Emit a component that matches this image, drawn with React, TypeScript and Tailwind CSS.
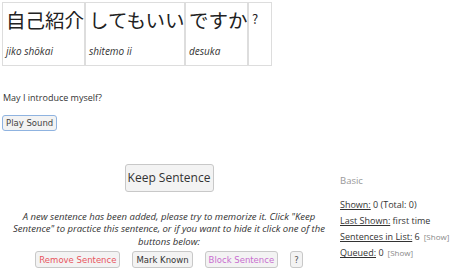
const words = [
  { jp: "自己紹介", romaji: "jiko shōkai", w: "w-[81px]" },
  { jp: "してもいい", romaji: "shitemo ii", w: "w-[100px]" },
  { jp: "ですか", romaji: "desuka", w: "w-[63px]" },
  { jp: "?", romaji: "", w: "w-[24px]" },
];

const stats = [
  { label: "Shown:", value: "0 (Total: 0)", show: false },
  { label: "Last Shown:", value: "first time", show: false },
  { label: "Sentences in List:", value: "6", show: true },
  { label: "Queued:", value: "0", show: true },
];

const smallBtn =
  "h-[17px] px-[3px] rounded-[3px] border border-[#c8c8c8] bg-[#f3f3f3] text-[8.5px] leading-none font-['DejaVu_Sans',sans-serif]";

export default function App() {
  return (
    <div className="w-[450px] h-[270px] bg-white text-[#333] font-['Open_Sans',sans-serif] overflow-hidden relative">
      {/* Sentence table */}
      <div className="flex ml-[2px] mt-[2px] border border-[#ddd] w-fit">
        {words.map((w, i) => (
          <div
            key={i}
            className={`${w.w} h-[62px] flex flex-col px-[3px] ${i > 0 ? "border-l-2 border-[#ddd]" : ""}`}
          >
            <div
              className={`${w.jp === "?" ? "text-[13px] mt-[4px]" : "text-[19.5px] mt-[5px]"} h-[24px] leading-[24px] whitespace-nowrap text-[#222] font-['Noto_Sans_CJK_JP',sans-serif]`}
            >
              {w.jp}
            </div>
            <div className="mt-[14px] text-[10px] italic leading-none text-[#333] whitespace-nowrap">
              {w.romaji}
            </div>
          </div>
        ))}
      </div>

      <div className="mt-[27px] ml-[3px] text-[9px] leading-none">
        May I introduce myself?
      </div>

      <button className="mt-[13px] ml-[2px] h-[16px] px-[3px] rounded-[3px] border border-[#8fb3e0] bg-[#f3f3f3] text-[8.5px] leading-none text-[#444] font-['DejaVu_Sans',sans-serif]">
        Play Sound
      </button>

      <div className="flex">
        {/* Main actions */}
        <div className="w-[338px] flex flex-col items-center">
          <button className="mt-[32px] w-[89px] h-[28px] rounded-[3px] border border-[#c8c8c8] bg-[#f3f3f3] text-[12px] text-[#333]">
            Keep Sentence
          </button>
          <p className="mt-[19px] w-[318px] text-center text-[9.5px] leading-[12.5px] italic text-[#333]">
            A new sentence has been added, please try to memorize it. Click "Keep Sentence" to practice this sentence, or if you want to hide it click one of the buttons below:
          </p>
          <div className="flex gap-[12px] mt-[3px]">
            <button className={`${smallBtn} text-[#e8555e]`}>Remove Sentence</button>
            <button className={`${smallBtn} text-[#333]`}>Mark Known</button>
            <button className={`${smallBtn} text-[#c86dcf]`}>Block Sentence</button>
            <button className={`${smallBtn} text-[#555] px-[2px]`}>?</button>
          </div>
        </div>

        {/* Stats */}
        <div className="ml-[2px] mt-[44px] text-[9px]">
          <div className="text-[#999] text-[9.5px] leading-none">Basic</div>
          <div className="mt-[14px] flex flex-col gap-[5px]">
            {stats.map((s) => (
              <div key={s.label} className="leading-[11px] whitespace-nowrap">
                <span className="underline">{s.label}</span> {s.value}
                {s.show && <span className="text-[#888] text-[8px] ml-[4px]">[Show]</span>}
              </div>
            ))}
          </div>
        </div>
      </div>
    </div>
  );
}
